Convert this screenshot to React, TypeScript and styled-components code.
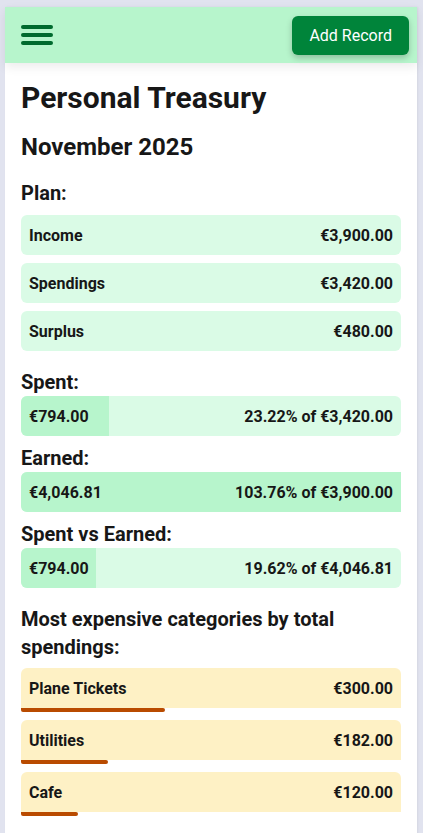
import styled, { createGlobalStyle } from 'styled-components';

interface IPlanItem {
  label: string;
  value: string;
}

interface IProgressItem {
  title: string;
  amount: string;
  detail: string;
  percent: number;
}

interface ICategoryItem {
  name: string;
  value: string;
  share: number;
}

const PLAN: IPlanItem[] = [
  { label: 'Income', value: '€3,900.00' },
  { label: 'Spendings', value: '€3,420.00' },
  { label: 'Surplus', value: '€480.00' }
];

const PROGRESS: IProgressItem[] = [
  { title: 'Spent:', amount: '€794.00', detail: '23.22% of €3,420.00', percent: 23.22 },
  { title: 'Earned:', amount: '€4,046.81', detail: '103.76% of €3,900.00', percent: 103.76 },
  { title: 'Spent vs Earned:', amount: '€794.00', detail: '19.62% of €4,046.81', percent: 19.62 }
];

const CATEGORIES: ICategoryItem[] = [
  { name: 'Plane Tickets', value: '€300.00', share: 37.78 },
  { name: 'Utilities', value: '€182.00', share: 22.92 },
  { name: 'Cafe', value: '€120.00', share: 15.11 }
];

const GlobalStyle = createGlobalStyle`
  html, body {
    margin: 0;
    background: #e1e3ef;
  }
  body {
    font-family: Roboto, "Liberation Sans", sans-serif;
    color: #171717;
  }
`;

const ScPage = styled.div`
  padding: 7px 6px 0 5px;
`;

const ScCard = styled.div`
  background: #fff;
  min-height: 826px;
  box-shadow: 1px 0 2px rgba(0, 0, 0, 0.06);
`;

const ScHeader = styled.header`
  height: 56px;
  display: flex;
  align-items: center;
  justify-content: space-between;
  padding: 0 8px 0 16px;
  background: #b7f5cc;
  box-shadow: 0 4px 10px rgba(0, 0, 0, 0.08);
  position: relative;
`;

const ScMenuButton = styled.button`
  display: flex;
  flex-direction: column;
  gap: 4.5px;
  padding: 0;
  border: 0;
  background: none;
  cursor: pointer;

  span {
    display: block;
    width: 32px;
    height: 3.5px;
    border-radius: 2px;
    background: #006a2e;
  }
`;

const ScAddButton = styled.button`
  height: 39px;
  padding: 0 17px;
  border: 0;
  border-radius: 6px;
  background: #00843a;
  color: #fff;
  font-family: Roboto, "Liberation Sans", sans-serif;
  font-size: 16px;
  font-weight: 400;
  box-shadow: 0 3px 6px rgba(0, 0, 0, 0.22);
  cursor: pointer;
`;

const ScContent = styled.main`
  display: flex;
  flex-direction: column;
  gap: 17px;
  padding: 17px 16px 24px;
`;

const ScTitle = styled.h1`
  margin: 0;
  font-size: 30px;
  line-height: 36px;
  font-weight: 700;
`;

const ScMonth = styled.h2`
  margin: 0;
  font-size: 24px;
  line-height: 29px;
  font-weight: 700;
`;

const ScSectionTitle = styled.h3`
  margin: 0;
  font-size: 20px;
  line-height: 28px;
  font-weight: 700;
`;

const ScSection = styled.section<{ $gap: number }>`
  display: flex;
  flex-direction: column;
  gap: ${p => p.$gap}px;
`;

const ScList = styled.div`
  display: flex;
  flex-direction: column;
  gap: 8px;
`;

const ScRow = styled.div<{ $tone: 'green' | 'amber' }>`
  height: 40px;
  display: flex;
  align-items: center;
  justify-content: space-between;
  padding: 0 8px;
  font-size: 16px;
  font-weight: 700;
  background: ${p => (p.$tone === 'green' ? '#dafbe6' : '#fef1c5')};
  border-radius: ${p => (p.$tone === 'green' ? '6px' : '6px 6px 0 0')};
`;

const ScBar = styled.div`
  position: relative;
  height: 40px;
  display: flex;
  align-items: center;
  justify-content: space-between;
  padding: 0 8px;
  font-size: 16px;
  font-weight: 700;
  background: #dafbe6;
  border-radius: 6px;

  span {
    position: relative;
  }
`;

const ScFill = styled.div`
  position: absolute;
  left: 0;
  top: 0;
  bottom: 0;
  background: #b7f5cc;
  border-radius: 6px 0 0 6px;
`;

const ScCategory = styled.div`
  display: flex;
  flex-direction: column;
`;

const ScUnderline = styled.div`
  height: 4px;
  background: #b94b00;
  border-radius: 0 3px 3px 3px;
`;

export default function App() {
  return <>
    <GlobalStyle />
    <ScPage>
      <ScCard>
        <ScHeader>
          <ScMenuButton aria-label="Menu">
            <span />
            <span />
            <span />
          </ScMenuButton>
          <ScAddButton>Add Record</ScAddButton>
        </ScHeader>
        <ScContent>
          <ScTitle>Personal Treasury</ScTitle>
          <ScMonth>November 2025</ScMonth>
          <ScSection $gap={8}>
            <ScSectionTitle>Plan:</ScSectionTitle>
            <ScList>
              {PLAN.map(item => <ScRow key={item.label} $tone="green">
                <span>{item.label}</span>
                <span>{item.value}</span>
              </ScRow>)}
            </ScList>
          </ScSection>
          <ScSection $gap={8}>
            {PROGRESS.map(item => <div key={item.title}>
              <ScSectionTitle>{item.title}</ScSectionTitle>
              <ScBar>
                <ScFill style={{ width: `${Math.min(item.percent, 100)}%` }} />
                <span>{item.amount}</span>
                <span>{item.detail}</span>
              </ScBar>
            </div>)}
          </ScSection>
          <ScSection $gap={7}>
            <ScSectionTitle>Most expensive categories by total spendings:</ScSectionTitle>
            <ScList>
              {CATEGORIES.map(item => <ScCategory key={item.name}>
                <ScRow $tone="amber">
                  <span>{item.name}</span>
                  <span>{item.value}</span>
                </ScRow>
                <ScUnderline style={{ width: `${item.share}%` }} />
              </ScCategory>)}
            </ScList>
          </ScSection>
        </ScContent>
      </ScCard>
    </ScPage>
  </>;
}
